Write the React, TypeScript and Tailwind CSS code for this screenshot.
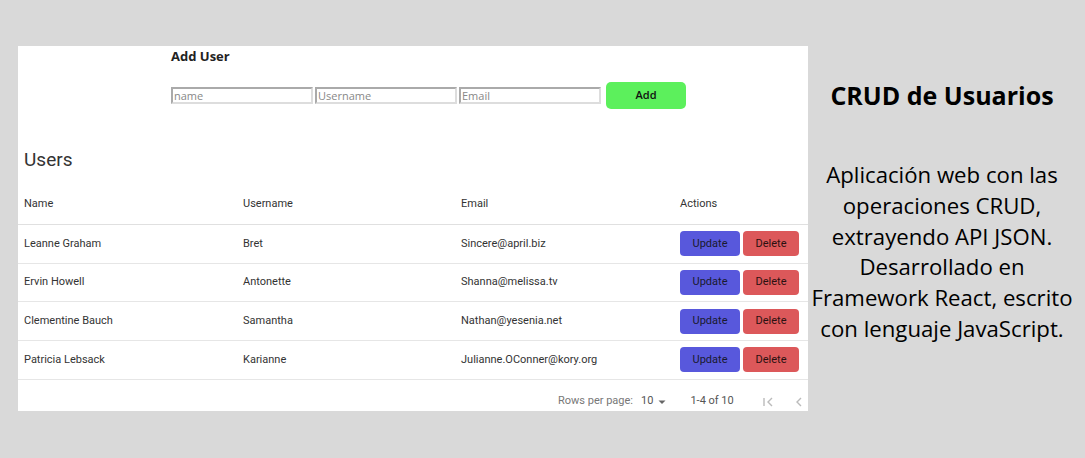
import React from 'react';

const users = [
  { name: 'Leanne Graham', username: 'Bret', email: 'Sincere@april.biz' },
  { name: 'Ervin Howell', username: 'Antonette', email: 'Shanna@melissa.tv' },
  { name: 'Clementine Bauch', username: 'Samantha', email: 'Nathan@yesenia.net' },
  { name: 'Patricia Lebsack', username: 'Karianne', email: 'Julianne.OConner@kory.org' },
];

const App: React.FC = () => {
  return (
    <div className="flex h-[458px] w-[1085px] bg-[#d9d9d9]">
      {/* App panel */}
      <div className="mt-[46px] ml-[18px] flex h-[365px] w-[790px] flex-col bg-white font-['Roboto',sans-serif] text-[#333]">
        {/* Add User */}
        <div className="pl-[153px] pt-[1px]">
          <h2 className="font-['Open_Sans',sans-serif] text-[13px] font-bold leading-[18px] text-[#222]">Add User</h2>
          <div className="mt-[17px] flex items-center">
            <input
              placeholder="name"
              className="h-[17px] w-[142px] border-2 border-[#aaa] border-b-[#ddd] border-r-[#ddd] px-[1px] font-['Open_Sans',sans-serif] text-[11px] placeholder:text-[#888]"
            />
            <input
              placeholder="Username"
              className="ml-[2px] h-[17px] w-[142px] border-2 border-[#aaa] border-b-[#ddd] border-r-[#ddd] px-[1px] font-['Open_Sans',sans-serif] text-[11px] placeholder:text-[#888]"
            />
            <input
              placeholder="Email"
              className="ml-[2px] h-[17px] w-[142px] border-2 border-[#aaa] border-b-[#ddd] border-r-[#ddd] px-[1px] font-['Open_Sans',sans-serif] text-[11px] placeholder:text-[#888]"
            />
            <button className="ml-[5px] h-[27px] w-[80px] rounded-[5px] bg-[#5cf05c] font-['Open_Sans',sans-serif] text-[11px] font-semibold text-[#111]">
              Add
            </button>
          </div>
        </div>

        {/* Users table */}
        <h1 className="mt-[39px] pl-[6px] text-[19px] leading-[24px] text-[#333]">Users</h1>
        <div className="mt-[13px] text-[11px]">
          <div className="flex h-[40px] items-center border-b border-[#e0e0e0]">
            <div className="w-[225px] pl-[6px]">Name</div>
            <div className="w-[218px]">Username</div>
            <div className="w-[219px]">Email</div>
            <div>Actions</div>
          </div>
          {users.map((u) => (
            <div key={u.email} className="flex h-[38.7px] items-center border-b border-[#e6e6e6] text-[11px]">
              <div className="w-[225px] pl-[6px]">{u.name}</div>
              <div className="w-[218px]">{u.username}</div>
              <div className="w-[219px]">{u.email}</div>
              <div className="flex gap-[3px]">
                <button className="h-[25px] w-[60px] rounded-[4px] bg-[#5858dc] text-[11px] text-[#1a1a2e]">Update</button>
                <button className="h-[25px] w-[56px] rounded-[4px] bg-[#dc585a] text-[11px] text-[#2a1111]">Delete</button>
              </div>
            </div>
          ))}
        </div>

        {/* Pagination */}
        <div className="mt-auto flex h-[19px] items-center text-[11px] text-[#555]">
          <span className="ml-[540px] text-[#777]">Rows per page:</span>
          <span className="ml-[8px]">10</span>
          <svg className="ml-[4px]" width="10" height="10" viewBox="0 0 10 10">
            <path d="M1.5 3.5 L5 7 L8.5 3.5 Z" fill="#666" />
          </svg>
          <span className="ml-[23px]">1-4 of 10</span>
          <svg className="ml-[28px]" width="14" height="14" viewBox="0 0 14 14" fill="none" stroke="#bbb" strokeWidth="1.4">
            <path d="M2 3 V11" />
            <path d="M10 3 L6 7 L10 11" />
          </svg>
          <svg className="ml-[18px]" width="10" height="14" viewBox="0 0 10 14" fill="none" stroke="#bbb" strokeWidth="1.4">
            <path d="M7 3 L3 7 L7 11" />
          </svg>
        </div>
      </div>

      {/* Description */}
      <div className="flex w-[268px] flex-col items-center pt-[78px] text-center font-['Open_Sans',sans-serif] text-black">
        <h2 className="whitespace-nowrap text-[25px] font-bold leading-[34px]">CRUD de Usuarios</h2>
        <p className="mt-[48px] whitespace-nowrap text-[22.2px] leading-[30.8px]">
          Aplicación web con las
          <br />
          operaciones CRUD,
          <br />
          extrayendo API JSON.
          <br />
          Desarrollado en
          <br />
          Framework React, escrito
          <br />
          con lenguaje JavaScript.
        </p>
      </div>
    </div>
  );
};

export default App;
